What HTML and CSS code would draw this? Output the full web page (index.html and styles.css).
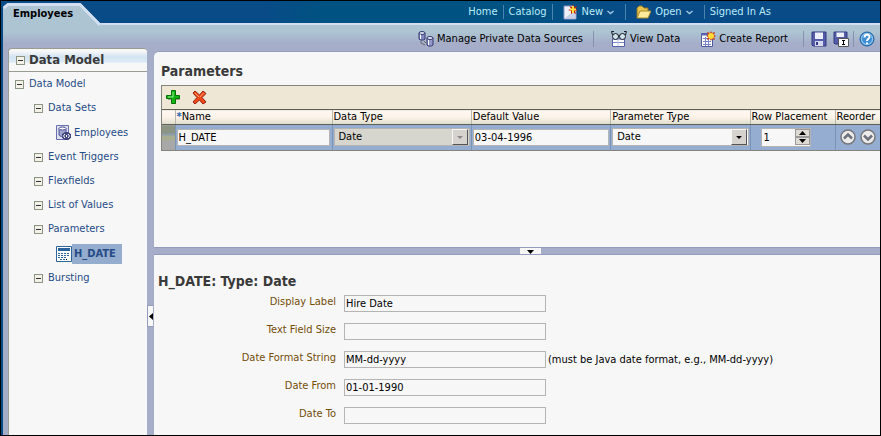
FILE: index.html
```
<!DOCTYPE html>
<html lang="en">
<head>
    <meta charset="UTF-8">
    <meta name="viewport" content="width=device-width, initial-scale=1.0">
    <title>Employees - Data Model</title>
    <link rel="stylesheet" href="styles.css">
</head>
<body>
    <header class="topbar">
        <a class="tab" href="#employees">
            <svg class="tab-shape" width="98" height="24" viewBox="0 0 98 24">
                <path d="M0 24V5L5 0H77L98 21V24Z" fill="#adc5d3"/>
                <path d="M0.5 5L5 1.5H77L97 22" fill="none" stroke="#d3dff0" stroke-width="3"/>
            </svg>
            <span>Employees</span>
        </a>
        <nav class="global-nav">
            <a href="#home">Home</a>
            <a href="#catalog">Catalog</a>
            <button type="button">
                <svg width="15" height="16" viewBox="0 0 15 16">
                    <path d="M1 2H10L13 6V15H1Z" fill="#eef1fa" stroke="#8f98c8"/>
                    <path d="M2 14L12 6V14Z" fill="#c8cfe8"/>
                    <path d="M10 0L11 3L14 2L12.5 5L15 6L12 7L13 10L10 8.5L8 10L8 7L5 6L8 5L6.5 2L9 3Z" fill="#c8200c"/>
                    <path d="M10 2V9M7 5.5H13" stroke="#ffe23c" stroke-width="2"/>
                </svg>
                <span>New</span>
                <svg width="7" height="5" viewBox="0 0 7 5"><path d="M0.5 1L3.5 3.5L6.5 1" fill="none" stroke="#9fc6e4" stroke-width="1.5"/></svg>
            </button>
            <button type="button">
                <svg width="15" height="16" viewBox="0 0 15 16">
                    <path d="M1 14V4L3 2H6L8 4H12V7" fill="#e8c64c" stroke="#8c7428"/>
                    <path d="M1 14L4 7H15L12 14Z" fill="#fbeb9a" stroke="#a88a30"/>
                </svg>
                <span>Open</span>
                <svg width="7" height="5" viewBox="0 0 7 5"><path d="M0.5 1L3.5 3.5L6.5 1" fill="none" stroke="#9fc6e4" stroke-width="1.5"/></svg>
            </button>
            <span class="signed-in">Signed In As</span>
        </nav>
    </header>

    <div class="toolbar">
        <button type="button" class="manage divided">
            <svg width="16" height="16" viewBox="0 0 16 16">
                <path d="M1 2V8C2 9.5 6 9.5 7 8V2Z" fill="#8288bc" stroke="#363b70"/>
                <ellipse cx="4" cy="2" rx="3" ry="1.5" fill="#dfe2f4" stroke="#363b70"/>
                <path d="M9 7V14C10 15.5 14 15.5 15 14V7Z" fill="#9298c8" stroke="#363b70"/>
                <ellipse cx="12" cy="7" rx="3" ry="1.5" fill="#e8eaf8" stroke="#363b70"/>
                <path d="M2.5 3.5V8M10.5 9V14" stroke="#fff"/>
                <path d="M3 10V12L7 14M6 10L8 12" fill="none" stroke="#666"/>
            </svg>
            <span>Manage Private Data Sources</span>
        </button>
        <button type="button" class="view">
            <svg width="16" height="16" viewBox="0 0 16 16">
                <path d="M1.5 8V15.5H13.5V8Z" fill="#fff" stroke="#5360a8"/>
                <path d="M2 11.5H13" stroke="#7c88c8"/>
                <path d="M7 8V15" stroke="#b8c0e4"/>
                <circle cx="4.500" cy="5.500" r="3" fill="#cfe4ec" stroke="#161a24"/>
                <circle cx="11.500" cy="5.500" r="3" fill="#cfe4ec" stroke="#161a24"/>
                <path d="M1.5 4L0.5 0.5H3M14.5 4L15.5 0.5H13M7 5H9" fill="none" stroke="#161a24"/>
            </svg>
            <span>View Data</span>
        </button>
        <button type="button" class="create divided">
            <svg width="16" height="16" viewBox="0 0 16 16">
                <path d="M1.5 2.5H12.5V15.5H1.5Z" fill="#fff" stroke="#5058a0"/>
                <path d="M1 3.5H10" stroke="#5a64b4" stroke-width="2"/>
                <path d="M3 7.5H11M3 10.5H11M3 13.5H11M5.5 6V15M8.5 6V15" stroke="#7a84c4"/>
                <path d="M11 0L12 2L15 1L14 4L16 5L14 6L15 9L12 8L11 10L10 8L7 9L8 6L6 5L8 4L7 1L10 2Z" fill="#c43a14"/>
                <circle cx="11" cy="5" r="3" fill="#ffd83a"/>
            </svg>
            <span>Create Report</span>
        </button>
        <button type="button" class="save" aria-label="Save">
            <svg width="16" height="16" viewBox="0 0 16 16">
                <path d="M1 1H15V15H2L1 14Z" fill="#555caa" stroke="#343a80"/>
                <path d="M4 1.5H12V8H4Z" fill="#eef0fc"/>
                <path d="M4 10H12V15H4Z" fill="#d4d8ee"/>
                <path d="M6 11V14" stroke="#343a80" stroke-width="2"/>
            </svg>
        </button>
        <button type="button" class="save-as divided" aria-label="Save As">
            <svg width="16" height="16" viewBox="0 0 16 16">
                <path d="M1 1H14V13H2L1 12Z" fill="#555caa" stroke="#343a80"/>
                <path d="M3.5 1.5H11V6H3.5Z" fill="#eef0fc"/>
                <path d="M5.5 7.5H15.5V15.5H5.5Z" fill="#fff" stroke="#555"/>
                <path d="M9 9.5H12M9 13.5H12M10.5 9V14" stroke="#000"/>
            </svg>
        </button>
        <button type="button" class="help" aria-label="Help">
            <svg width="16" height="16" viewBox="0 0 16 16">
                <circle cx="8" cy="8" r="7" fill="#5aa6e0" stroke="#1c5a9c"/>
                <circle cx="8" cy="8" r="5.500" fill="#3f8fd2" stroke="#9ccdf0"/>
                <path d="M5.5 6.5C5.5 3 10.5 3 10.5 6C10.5 8 8 7.5 8 10M8 11.5V13" fill="none" stroke="#fff" stroke-width="2"/>
            </svg>
        </button>
    </div>

    <main class="workspace">
        <aside class="sidebar">
            <h2><button type="button" class="toggle" aria-label="Collapse"></button>Data Model</h2>
            <ul class="tree">
                <li>
                    <div class="node"><button type="button" class="toggle" aria-label="Collapse"></button><a href="#model">Data Model</a></div>
                    <ul>
                        <li>
                            <div class="node"><button type="button" class="toggle" aria-label="Collapse"></button><a href="#datasets">Data Sets</a></div>
                            <ul>
                                <li class="node leaf">
                                    <svg width="16" height="16" viewBox="0 0 16 16">
                                        <path d="M0.5 0.5H12.5V14.5H0.5Z" fill="#dfe1f1" stroke="#6a6eae"/>
                                        <path d="M3 3.5V10C4 12 9 12 10 10V3.5Z" fill="#9fa5cf" stroke="#4a4f92"/>
                                        <ellipse cx="6.500" cy="3.500" rx="3.500" ry="1.500" fill="#fff" stroke="#4a4f92"/>
                                        <circle cx="10.500" cy="11" r="4" fill="#41457f"/>
                                        <path d="M10.5 7L15 9V13L11 15L6 13V9Z" fill="#41457f"/>
                                        <path d="M9 9L7.5 11L9 13M12 9L13.5 11L12 13M10.5 10V12" fill="none" stroke="#fff"/>
                                    </svg>
                                    <a href="#ds-employees">Employees</a>
                                </li>
                            </ul>
                        </li>
                        <li><div class="node"><button type="button" class="toggle" aria-label="Collapse"></button><a href="#triggers">Event Triggers</a></div></li>
                        <li><div class="node"><button type="button" class="toggle" aria-label="Collapse"></button><a href="#flexfields">Flexfields</a></div></li>
                        <li><div class="node"><button type="button" class="toggle" aria-label="Collapse"></button><a href="#lov">List of Values</a></div></li>
                        <li>
                            <div class="node"><button type="button" class="toggle" aria-label="Collapse"></button><a href="#parameters">Parameters</a></div>
                            <ul>
                                <li class="node leaf">
                                    <svg width="16" height="16" viewBox="0 0 16 16">
                                        <path d="M0.5 0.5H15.5V15.5H0.5Z" fill="#fff" stroke="#2c649c"/>
                                        <path d="M2 3.5H14" stroke="#2c649c" stroke-width="3"/>
                                        <path d="M2 7.5H13M2 9.5H13M2 11.5H11M4 13.5H9" stroke="#2c649c" stroke-dasharray="2 1"/>
                                        <path d="M10 13.5H11" stroke="#000"/>
                                    </svg>
                                    <a class="selected" href="#h-date">H_DATE</a>
                                </li>
                            </ul>
                        </li>
                        <li><div class="node"><button type="button" class="toggle" aria-label="Collapse"></button><a href="#bursting">Bursting</a></div></li>
                    </ul>
                </li>
            </ul>
        </aside>

        <div class="splitter-v">
            <button type="button" aria-label="Collapse sidebar"><svg width="4" height="7" viewBox="0 0 4 7"><path d="M4 0V7L0 3.5Z"/></svg></button>
        </div>

        <div class="content">
            <section class="parameters">
                <h2>Parameters</h2>
                <div class="grid">
                    <div class="grid-tools">
                        <button type="button" aria-label="Add">
                            <svg width="15" height="15" viewBox="0 0 15 15">
                                <path d="M6 2H10V6H14V10H10V14H6V10H2V6H6Z" fill="#9aa08c"/>
                                <path d="M5.5 0.5H9.5V5.5H13.5V8.5H9.5V13.5H5.5V8.5H0.5V5.5H5.5Z" fill="#14b414" stroke="#087008"/>
                                <path d="M7 2V7H2" fill="none" stroke="#8cf08c"/>
                            </svg>
                        </button>
                        <button type="button" aria-label="Delete">
                            <svg width="15" height="15" viewBox="0 0 15 15">
                                <path d="M3 1L7.5 5L11 1L14 3.5L10 7.5L14 12L11 14L7.5 10L3 14L1 12L5 7.5L1 3Z" fill="#f04818" stroke="#98200c"/>
                                <path d="M3 3L7 7M11.5 3L8 7" stroke="#ff9c70"/>
                            </svg>
                        </button>
                    </div>
                    <table>
                        <colgroup>
                            <col class="col-handle">
                            <col class="col-name">
                            <col class="col-value">
                            <col class="col-value">
                            <col class="col-value">
                            <col class="col-row">
                            <col class="col-reorder">
                        </colgroup>
                        <thead>
                            <tr>
                                <th></th>
                                <th><span class="required">*</span>Name</th>
                                <th>Data Type</th>
                                <th>Default Value</th>
                                <th>Parameter Type</th>
                                <th>Row Placement</th>
                                <th>Reorder</th>
                            </tr>
                        </thead>
                        <tbody>
                            <tr>
                                <td class="handle"></td>
                                <td><input type="text" aria-label="Name" value="H_DATE"></td>
                                <td>
                                    <div class="select">
                                        <select aria-label="Data Type" disabled><option>Date</option></select>
                                        <span class="arrow"></span>
                                    </div>
                                </td>
                                <td><input type="text" aria-label="Default Value" value="03-04-1996"></td>
                                <td>
                                    <div class="select">
                                        <select aria-label="Parameter Type"><option>Date</option></select>
                                        <span class="arrow"></span>
                                    </div>
                                </td>
                                <td>
                                    <div class="spinner">
                                        <input type="number" aria-label="Row Placement" value="1">
                                        <div class="steps">
                                            <button type="button" aria-label="Increase"><svg width="7" height="4" viewBox="0 0 7 4"><path d="M0 4H7L3.5 0Z"/></svg></button>
                                            <button type="button" aria-label="Decrease"><svg width="7" height="4" viewBox="0 0 7 4"><path d="M0 0H7L3.5 4Z"/></svg></button>
                                        </div>
                                    </div>
                                </td>
                                <td>
                                    <div class="reorder">
                                        <button type="button" aria-label="Move up"><svg width="16" height="16" viewBox="0 0 16 16"><circle cx="8" cy="8" r="7" fill="#ececec" stroke="#77777b" stroke-width="1.5"/><path d="M4 9.5L8 5.5L12 9.5" fill="none" stroke="#6c7078" stroke-width="2.5"/></svg></button>
                                        <button type="button" aria-label="Move down"><svg width="16" height="16" viewBox="0 0 16 16"><circle cx="8" cy="8" r="7" fill="#ececec" stroke="#77777b" stroke-width="1.5"/><path d="M4 6.5L8 10.5L12 6.5" fill="none" stroke="#6c7078" stroke-width="2.5"/></svg></button>
                                    </div>
                                </td>
                            </tr>
                        </tbody>
                    </table>
                </div>
            </section>

            <div class="splitter-h">
                <button type="button" aria-label="Collapse details"><svg width="7" height="4" viewBox="0 0 7 4"><path d="M0 0H7L3.5 4Z"/></svg></button>
            </div>

            <section class="details">
                <h2>H_DATE: Type: Date</h2>
                <form>
                    <label for="display-label">Display Label</label>
                    <input type="text" id="display-label" value="Hire Date">
                    <span></span>
                    <label for="field-size">Text Field Size</label>
                    <input type="text" id="field-size">
                    <span></span>
                    <label for="date-format">Date Format String</label>
                    <input type="text" id="date-format" value="MM-dd-yyyy">
                    <span>(must be Java date format, e.g., MM-dd-yyyy)</span>
                    <label for="date-from">Date From</label>
                    <input type="text" id="date-from" value="01-01-1990">
                    <span></span>
                    <label for="date-to">Date To</label>
                    <input type="text" id="date-to">
                    <span></span>
                </form>
            </section>
        </div>
    </main>
</body>
</html>
```
FILE: styles.css
```
/* General Styles */
* {
    box-sizing: border-box;
}

body {
    margin: 0;
    min-height: 100vh;
    display: flex;
    flex-direction: column;
    border: 1px solid #000;
    padding-left: 2px;
    background-color: #084b87;
    font-family: "DejaVu Sans Condensed", "DejaVu Sans", sans-serif;
    font-size: 11px;
    line-height: 14px;
    color: #000;
}

button, input, select {
    font: inherit;
    color: inherit;
    margin: 0;
}

button {
    display: flex;
    align-items: center;
    padding: 0;
    border: none;
    background: none;
    white-space: nowrap;
}

svg {
    display: block;
    flex: none;
}

a {
    color: inherit;
    text-decoration: none;
}

h2 {
    margin: 0;
    font-size: 14px;
    line-height: 20px;
    font-weight: bold;
    color: #3a3a3a;
}

ul {
    list-style: none;
    margin: 0;
    padding: 0;
}

/* Top bar */
.topbar {
    display: flex;
    justify-content: space-between;
    height: 22px;
    background: linear-gradient(90deg, #084b87 30%, #005282 36%, #005282 60%, #084b87 72%);
}

.tab {
    position: relative;
    margin-top: 2px;
    padding: 4px 30px 0 10px;
    font-weight: bold;
}

.tab span {
    position: relative;
}

.tab-shape {
    position: absolute;
    top: 0;
    left: 0;
}

.global-nav {
    display: flex;
    align-items: center;
    padding-right: 104px;
    color: #b8ecfa;
}

.global-nav > * {
    padding: 0 5px;
    border-left: 1px solid #4585b0;
}

.global-nav > :first-child {
    border-left: none;
}

.global-nav button {
    gap: 4px;
    padding: 0 11px 0 10px;
}

/* Toolbar */
.toolbar {
    display: flex;
    justify-content: flex-end;
    align-items: center;
    height: 25px;
    padding: 4px 5px 0 0;
    border-top: 2px solid #d3dff0;
    background: linear-gradient(#adc5d3 30%, #a5adc8 80%);
}

.toolbar button {
    gap: 3px;
}

.toolbar .divided {
    border-right: 1px solid #8890b0;
}

.toolbar .manage {
    padding-right: 10px;
}

.toolbar .view {
    padding: 0 9px 0 17px;
}

.toolbar .create {
    padding: 0 15px 0 11px;
}

.toolbar .save {
    padding: 0 2px 0 7px;
}

.toolbar .save-as {
    padding: 0 4px;
}

.toolbar .help {
    padding-left: 5px;
}

/* Workspace */
.workspace {
    flex: 1;
    display: flex;
    padding-left: 5px;
    background-color: #a5adc8;
}

.sidebar {
    flex: none;
    width: 139px;
    border: 1px solid #999c90;
    border-width: 1px 0 0 1px;
    border-radius: 4px 4px 0 0;
    background-color: #f7f7f7;
}

.sidebar h2 {
    display: flex;
    align-items: center;
    gap: 4px;
    height: 23px;
    padding-left: 7px;
    border-bottom: 1px solid #999c90;
    border-radius: 4px 4px 0 0;
    background: linear-gradient(#f7f7f7 10%, #d3e4f2 35%, #dcebf5 60%, #f7f7f7 65%);
    font-size: 13px;
}

.toggle {
    flex: none;
    width: 9px;
    height: 9px;
    border: 1px solid #8c9484;
    background: linear-gradient(#333, #333) center / 5px 1px no-repeat, #f3f1e8;
}

.tree {
    padding-left: 6px;
    color: #264b86;
}

.tree ul {
    padding-left: 19px;
}

.node {
    display: flex;
    align-items: center;
    gap: 5px;
    height: 24px;
}

.tree .leaf {
    height: 25px;
    padding-left: 3px;
    gap: 0;
}

.leaf a {
    padding: 3px 2px;
}

.leaf .selected {
    padding-right: 6px;
    background-color: #94accd;
    font-weight: bold;
}

/* Splitters */
.splitter-v {
    flex: none;
    display: flex;
    width: 7px;
    background-color: #a5adc8;
}

.splitter-v button {
    width: 6px;
    height: 22px;
    margin-top: 257px;
    border: 1px solid #949cbd;
    border-right: none;
    justify-content: flex-end;
    background-color: #f7f7f7;
}

.splitter-h {
    display: flex;
    justify-content: center;
    height: 8px;
    border: 1px solid #949cbd;
    border-width: 1px 0;
    background-color: #a5adc8;
}

.splitter-h button {
    width: 21px;
    height: 6px;
    padding-top: 1px;
    margin-left: 27px;
    justify-content: center;
    background-color: #f7f7f7;
}

/* Content */
.content {
    flex: 1;
    min-width: 0;
    display: flex;
    flex-direction: column;
    margin-top: 3px;
    border-top: 1px solid #949cbd;
    border-radius: 5px 0 0 0;
    background-color: #f7f7f7;
}

.parameters {
    min-height: 195px;
    padding: 9px 0 0 7px;
}

.parameters h2 {
    margin-bottom: 4px;
}

.grid {
    border: 1px solid #84847c;
    border-right: none;
}

.grid-tools {
    display: flex;
    align-items: center;
    gap: 11px;
    height: 23px;
    padding-left: 4px;
    background-color: #efe7d6;
}

/* Parameter table */
table {
    width: 100%;
    table-layout: fixed;
    border-collapse: collapse;
}

.col-handle {
    width: 13px;
}

.col-name {
    width: 157px;
}

.col-row {
    width: 85px;
}

.col-reorder {
    width: 45px;
}

th {
    height: 15px;
    padding: 0 0 0 1px;
    border: 1px solid #5f5f55;
    border-width: 1px 0;
    border-left: 1px solid #b8b8ac;
    background: linear-gradient(#fff8f2, #fdf2e8 50%, #dcdccb);
    font-weight: normal;
    text-align: left;
    white-space: nowrap;
}

th:first-child, td:first-child {
    border-left: none;
}

.required {
    color: #2c64ac;
    font-weight: bold;
}

td {
    height: 25px;
    padding: 0 1px;
    border-left: 1px solid #7c94b4;
    background-color: #94add0;
}

td.handle {
    background: linear-gradient(#8c9484 30%, #8c9cac 31% 40%, #a8ac90 41% 60%, #a8a8a8 61%);
}

input {
    display: block;
    width: 153px;
    max-width: 100%;
    height: 17px;
    padding: 0 1px;
    border: 1px solid #b4b4b4;
    border-radius: 0;
    background-color: #f7f7f7;
}

.select {
    position: relative;
}

select {
    display: block;
    width: 100%;
    height: 18px;
    padding: 0 20px 0 4px;
    border: 1px solid #b4b4b4;
    border-radius: 0;
    appearance: none;
    background-color: #f7f7f7;
}

select:disabled {
    opacity: 1;
    background-color: #d6d6ce;
}

.arrow {
    position: absolute;
    top: 1px;
    right: 2px;
    width: 16px;
    height: 16px;
    border: 1px solid #f7f7f7;
    border-right-color: #555;
    border-bottom-color: #555;
    background-color: #d6d3ce;
    pointer-events: none;
}

.arrow::after {
    content: "";
    position: absolute;
    top: 6px;
    left: 4px;
    border: 3px solid transparent;
    border-top-color: #000;
    border-bottom: none;
}

select:disabled + .arrow::after {
    border-top-color: #888;
}

.spinner {
    display: flex;
    align-items: center;
    width: 50px;
    height: 19px;
    margin-left: 9px;
    border: 1px solid #b4b4b4;
    background-color: #f7f7f7;
}

.spinner input {
    flex: 1;
    min-width: 0;
    border: none;
    padding: 0 2px;
    appearance: textfield;
}

.spinner input::-webkit-inner-spin-button {
    display: none;
}

.steps button {
    width: 15px;
    height: 8px;
    border: 1px solid #999;
    justify-content: center;
    background-color: #dedbd4;
}

.reorder {
    display: flex;
    gap: 4px;
    padding-left: 3px;
}

/* Parameter details */
.details {
    padding: 16px 0 8px 4px;
}

.details h2 {
    margin-bottom: 4px;
}

.details form {
    display: grid;
    grid-template-columns: 178px 202px 1fr;
    column-gap: 8px;
    row-gap: 11px;
}

.details label {
    color: #734d08;
    text-align: right;
}

.details input {
    width: 100%;
}

.details form span {
    margin-left: -6px;
    padding-top: 2px;
}
```
